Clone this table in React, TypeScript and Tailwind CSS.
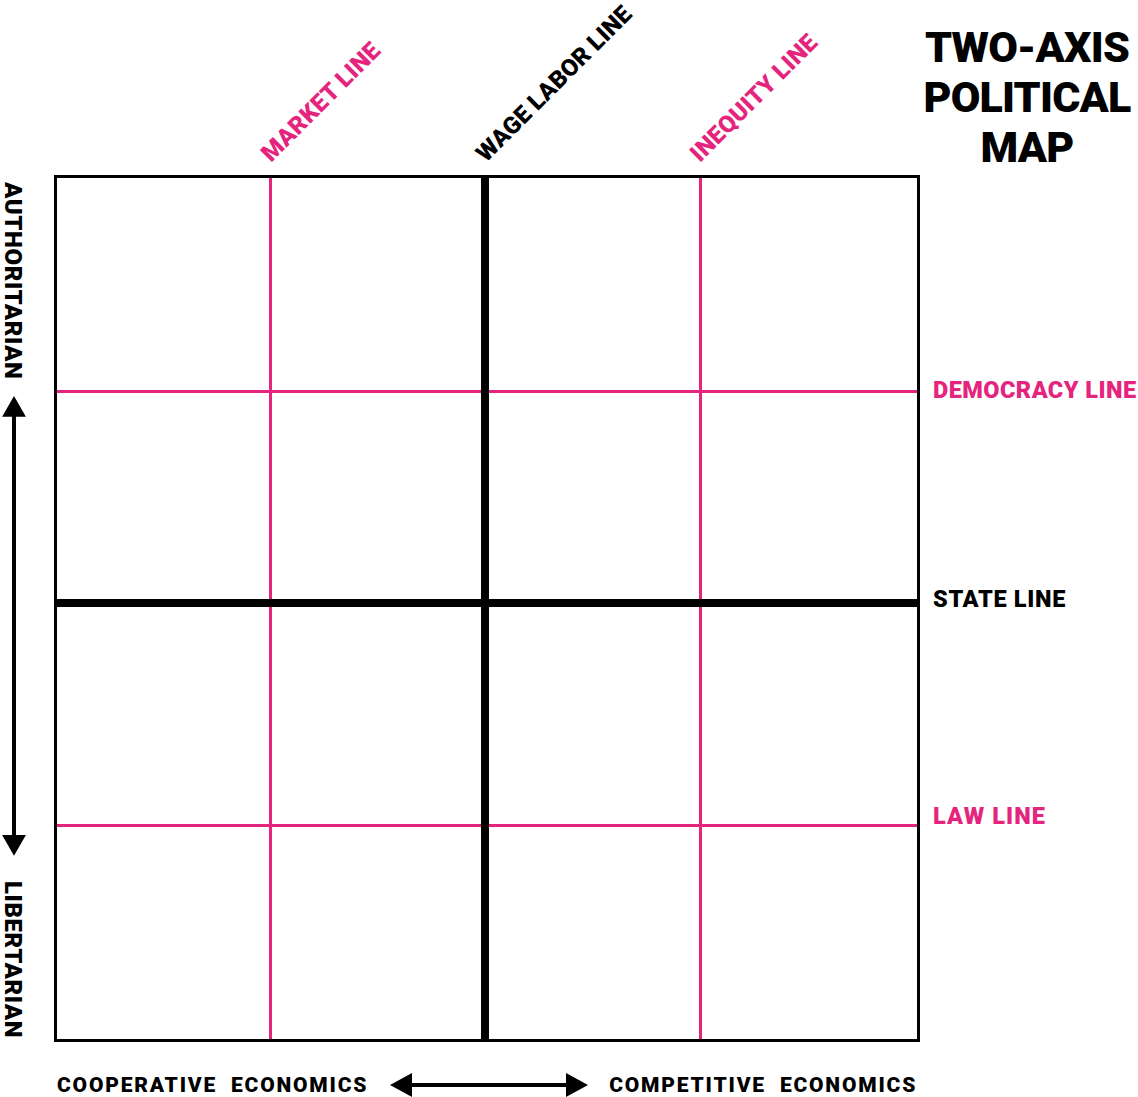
const PINK_TEXT = "text-[#e5257d]";

function ArrowV() {
  return (
    <svg width="26" height="464" viewBox="0 0 26 464">
      <rect x="11" y="18" width="4" height="428" fill="#000" />
      <polygon points="13,0 25,21 1,21" fill="#000" />
      <polygon points="13,464 25,443 1,443" fill="#000" />
    </svg>
  );
}

function ArrowH() {
  return (
    <svg width="198" height="26" viewBox="0 0 198 26" className="block">
      <rect x="18" y="11" width="162" height="4" fill="#000" />
      <polygon points="0,13 22,1 22,25" fill="#000" />
      <polygon points="198,13 176,1 176,25" fill="#000" />
    </svg>
  );
}

function DiagLabel({ text, className }: { text: string; className?: string }) {
  return (
    <span
      className={`block whitespace-nowrap text-[24px] leading-[20px] h-[20px] origin-[0px_18px] -rotate-45 ${className ?? ""}`}
    >
      {text}
    </span>
  );
}

function TopLabels() {
  return (
    <div className="grid h-full grid-cols-[3px_212px_3px_209px_8px_210px_3px_1fr]">
      <div className="col-start-3 flex items-end pb-[10px]">
        <DiagLabel text="MARKET LINE" className={`${PINK_TEXT} ml-[2px] tracking-[0.35px]`} />
      </div>
      <div className="col-start-5 flex items-end pb-[10px]">
        <DiagLabel text="WAGE LABOR LINE" className="ml-[5px] tracking-[0.15px]" />
      </div>
      <div className="col-start-7 flex items-end pb-[10px]">
        <DiagLabel text="INEQUITY LINE" className={`${PINK_TEXT} ml-[1px] tracking-[0.35px]`} />
      </div>
    </div>
  );
}

function Title() {
  return (
    <div className="pt-[22px] pr-[4px] text-center text-[43px] leading-[50px] tracking-[-0.8px]">
      TWO-AXIS
      <br />
      POLITICAL
      <br />
      MAP
    </div>
  );
}

function LeftAxis() {
  return (
    <div className="flex flex-col items-start pl-[1px] text-[24px] leading-[24px] tracking-[0.6px]">
      <div className="h-[223px] pt-[7px]">
        <span className="[writing-mode:vertical-rl] whitespace-nowrap">AUTHORITARIAN</span>
      </div>
      <ArrowV />
      <div className="pt-[25px]">
        <span className="[writing-mode:vertical-rl] whitespace-nowrap">LIBERTARIAN</span>
      </div>
    </div>
  );
}

function Chart() {
  return (
    <div className="grid border-[3px] border-black grid-cols-[212px_3px_209px_8px_210px_3px_1fr] grid-rows-[212px_3px_206px_8px_217px_3px_1fr]">
      {/* pink lines */}
      <div className="col-start-2 row-start-1 row-span-7 bg-[#e5257d]" />
      <div className="col-start-6 row-start-1 row-span-7 bg-[#e5257d]" />
      <div className="col-start-1 row-start-2 col-span-7 bg-[#e5257d]" />
      <div className="col-start-1 row-start-6 col-span-7 bg-[#e5257d]" />
      {/* state line + wage labor line */}
      <div className="col-start-1 row-start-4 col-span-7 bg-black" />
      <div className="col-start-4 row-start-1 row-span-7 bg-black" />
    </div>
  );
}

function RightLabels() {
  return (
    <div className="flex flex-col items-start pl-[13px] text-[23.5px] leading-[24px] tracking-[0.7px] whitespace-nowrap">
      <span className={`mt-[203px] ${PINK_TEXT} tracking-[0.45px]`}>DEMOCRACY LINE</span>
      <span className="mt-[185px]">STATE LINE</span>
      <span className={`mt-[193px] ${PINK_TEXT} tracking-[1.1px]`}>LAW LINE</span>
    </div>
  );
}

function BottomAxis() {
  return (
    <div className="col-start-1 col-span-2 flex items-center self-start pl-[57px] pt-[30px] text-[21px] leading-[24px] tracking-[1.8px]">
      <span className="whitespace-pre">COOPERATIVE  ECONOMICS</span>
      <div className="ml-[22px]">
        <ArrowH />
      </div>
      <span className="ml-[21px] whitespace-pre">COMPETITIVE  ECONOMICS</span>
    </div>
  );
}

export default function App() {
  return (
    <div className="grid h-[1097px] w-[1138px] grid-cols-[54px_866px_1fr] grid-rows-[175px_867px_1fr] overflow-hidden bg-white font-['Roboto',sans-serif] font-black text-black">
      <div />
      <TopLabels />
      <Title />
      <LeftAxis />
      <Chart />
      <RightLabels />
      <BottomAxis />
    </div>
  );
}
